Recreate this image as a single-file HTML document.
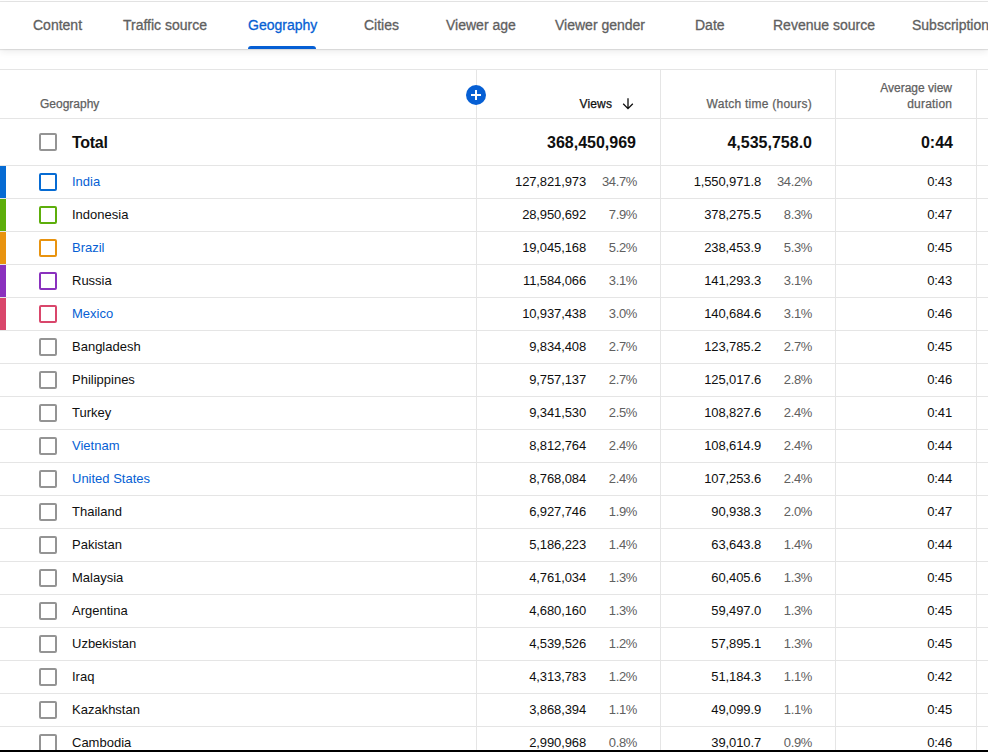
<!DOCTYPE html><html><head><meta charset="utf-8"><style>
*{margin:0;padding:0;box-sizing:border-box}
html,body{width:988px;height:752px;overflow:hidden;background:#fff;font-family:"Liberation Sans",sans-serif;position:relative}
.a{position:absolute;white-space:nowrap}
.hl{position:absolute;left:0;width:988px;height:1px;background:#e5e5e5}
.vl{position:absolute;width:1px;background:#e5e5e5}
.tab{position:absolute;white-space:nowrap;top:17px;font-size:14px;line-height:16px;color:#606060;-webkit-text-stroke:0.3px currentColor}
.cb{position:absolute;left:39px;width:18px;height:18px;border:2px solid #949494;border-radius:2px}
.nm{position:absolute;left:72px;font-size:13px;line-height:16px;color:#0f0f0f}
.num{position:absolute;font-size:13px;line-height:16px;color:#0f0f0f;text-align:right;letter-spacing:-0.12px}
.pct{position:absolute;font-size:13px;line-height:16px;color:#606060;text-align:right;letter-spacing:-0.35px}
.hd{position:absolute;font-size:12px;line-height:16px;color:#606060;text-align:right;-webkit-text-stroke:0.25px currentColor;white-space:nowrap}
.tot{position:absolute;font-size:16px;line-height:20px;white-space:nowrap;color:#0f0f0f;font-weight:bold;text-align:right}
</style></head><body>
<div class="hl" style="top:1px;background:#e5e5e5"></div>
<div class="a" style="left:0;top:2px;width:988px;height:47px;background:#fff;box-shadow:0 1px 1px rgba(0,0,0,0.10), 0 3px 7px rgba(0,0,0,0.07)"></div>
<div class="tab" style="left:33px;color:#606060">Content</div>
<div class="tab" style="left:123px;color:#606060">Traffic source</div>
<div class="tab" style="left:248px;color:#065fd4">Geography</div>
<div class="tab" style="left:364px;color:#606060">Cities</div>
<div class="tab" style="left:446px;color:#606060">Viewer age</div>
<div class="tab" style="left:555px;color:#606060">Viewer gender</div>
<div class="tab" style="left:695px;color:#606060">Date</div>
<div class="tab" style="left:773px;color:#606060">Revenue source</div>
<div class="tab" style="left:912px;color:#606060">Subscription status</div>
<div class="a" style="left:248px;top:46px;width:68px;height:3px;background:#065fd4;border-radius:3px 3px 0 0"></div>
<div class="hl" style="top:69px"></div>
<div class="hl" style="top:118px"></div>
<div class="hl" style="top:165px"></div>
<div class="hl" style="top:198px"></div>
<div class="hl" style="top:231px"></div>
<div class="hl" style="top:264px"></div>
<div class="hl" style="top:297px"></div>
<div class="hl" style="top:330px"></div>
<div class="hl" style="top:363px"></div>
<div class="hl" style="top:396px"></div>
<div class="hl" style="top:429px"></div>
<div class="hl" style="top:462px"></div>
<div class="hl" style="top:495px"></div>
<div class="hl" style="top:528px"></div>
<div class="hl" style="top:561px"></div>
<div class="hl" style="top:594px"></div>
<div class="hl" style="top:627px"></div>
<div class="hl" style="top:660px"></div>
<div class="hl" style="top:693px"></div>
<div class="hl" style="top:726px"></div>
<div class="hl" style="top:759px"></div>
<div class="vl" style="left:476px;top:70px;height:690px"></div>
<div class="vl" style="left:660px;top:70px;height:690px"></div>
<div class="vl" style="left:835px;top:70px;height:690px"></div>
<div class="vl" style="left:976px;top:70px;height:690px"></div>
<div class="hd" style="left:40px;top:96px;text-align:left">Geography</div>
<div class="a" style="left:466px;top:85px;width:20px;height:20px;border-radius:50%;background:#065fd4"></div>
<div class="a" style="left:471px;top:94px;width:10px;height:2px;background:#fff"></div>
<div class="a" style="left:475px;top:90px;width:2px;height:10px;background:#fff"></div>
<div class="hd" style="left:500px;width:112.2px;top:96px;color:#0f0f0f;letter-spacing:0.2px">Views</div>
<svg class="a" style="left:620px;top:96px" width="16" height="16" viewBox="0 0 16 16"><path d="M8 2.2v10.3M3.2 7.8L8 12.6l4.8-4.8" fill="none" stroke="#0f0f0f" stroke-width="1.3"/></svg>
<div class="hd" style="left:660px;width:152px;top:96px;letter-spacing:0.25px">Watch time (hours)</div>
<div class="hd" style="left:835px;width:117px;top:80px">Average view</div>
<div class="hd" style="left:835px;width:117.2px;top:96px;letter-spacing:0.2px">duration</div>
<div class="cb" style="top:133px"></div>
<div class="tot" style="left:72px;top:133px;text-align:left;letter-spacing:-0.3px">Total</div>
<div class="tot" style="left:480px;width:156px;top:133px">368,450,969</div>
<div class="tot" style="left:660px;width:152px;top:133px">4,535,758.0</div>
<div class="tot" style="left:835px;width:118px;top:133px">0:44</div>
<div class="a" style="left:0;top:166px;width:6px;height:32px;background:#066bd3"></div>
<div class="cb" style="top:173px;border-color:#066bd3"></div>
<div class="nm" style="top:174px;color:#065fd4">India</div>
<div class="num" style="left:486px;width:100px;top:174px">127,821,973</div>
<div class="pct" style="left:596px;width:41px;top:174px">34.7%</div>
<div class="num" style="left:660px;width:101px;top:174px">1,550,971.8</div>
<div class="pct" style="left:771px;width:41px;top:174px">34.2%</div>
<div class="num" style="left:835px;width:117px;top:174px">0:43</div>
<div class="a" style="left:0;top:199px;width:6px;height:32px;background:#5dae0b"></div>
<div class="cb" style="top:206px;border-color:#5dae0b"></div>
<div class="nm" style="top:207px;color:#0f0f0f">Indonesia</div>
<div class="num" style="left:486px;width:100px;top:207px">28,950,692</div>
<div class="pct" style="left:596px;width:41px;top:207px">7.9%</div>
<div class="num" style="left:660px;width:101px;top:207px">378,275.5</div>
<div class="pct" style="left:771px;width:41px;top:207px">8.3%</div>
<div class="num" style="left:835px;width:117px;top:207px">0:47</div>
<div class="a" style="left:0;top:232px;width:6px;height:32px;background:#e8930f"></div>
<div class="cb" style="top:239px;border-color:#e8930f"></div>
<div class="nm" style="top:240px;color:#065fd4">Brazil</div>
<div class="num" style="left:486px;width:100px;top:240px">19,045,168</div>
<div class="pct" style="left:596px;width:41px;top:240px">5.2%</div>
<div class="num" style="left:660px;width:101px;top:240px">238,453.9</div>
<div class="pct" style="left:771px;width:41px;top:240px">5.3%</div>
<div class="num" style="left:835px;width:117px;top:240px">0:45</div>
<div class="a" style="left:0;top:265px;width:6px;height:32px;background:#8a31be"></div>
<div class="cb" style="top:272px;border-color:#8a31be"></div>
<div class="nm" style="top:273px;color:#0f0f0f">Russia</div>
<div class="num" style="left:486px;width:100px;top:273px">11,584,066</div>
<div class="pct" style="left:596px;width:41px;top:273px">3.1%</div>
<div class="num" style="left:660px;width:101px;top:273px">141,293.3</div>
<div class="pct" style="left:771px;width:41px;top:273px">3.1%</div>
<div class="num" style="left:835px;width:117px;top:273px">0:43</div>
<div class="a" style="left:0;top:298px;width:6px;height:32px;background:#d9466b"></div>
<div class="cb" style="top:305px;border-color:#d9466b"></div>
<div class="nm" style="top:306px;color:#065fd4">Mexico</div>
<div class="num" style="left:486px;width:100px;top:306px">10,937,438</div>
<div class="pct" style="left:596px;width:41px;top:306px">3.0%</div>
<div class="num" style="left:660px;width:101px;top:306px">140,684.6</div>
<div class="pct" style="left:771px;width:41px;top:306px">3.1%</div>
<div class="num" style="left:835px;width:117px;top:306px">0:46</div>
<div class="cb" style="top:338px"></div>
<div class="nm" style="top:339px;color:#0f0f0f">Bangladesh</div>
<div class="num" style="left:486px;width:100px;top:339px">9,834,408</div>
<div class="pct" style="left:596px;width:41px;top:339px">2.7%</div>
<div class="num" style="left:660px;width:101px;top:339px">123,785.2</div>
<div class="pct" style="left:771px;width:41px;top:339px">2.7%</div>
<div class="num" style="left:835px;width:117px;top:339px">0:45</div>
<div class="cb" style="top:371px"></div>
<div class="nm" style="top:372px;color:#0f0f0f">Philippines</div>
<div class="num" style="left:486px;width:100px;top:372px">9,757,137</div>
<div class="pct" style="left:596px;width:41px;top:372px">2.7%</div>
<div class="num" style="left:660px;width:101px;top:372px">125,017.6</div>
<div class="pct" style="left:771px;width:41px;top:372px">2.8%</div>
<div class="num" style="left:835px;width:117px;top:372px">0:46</div>
<div class="cb" style="top:404px"></div>
<div class="nm" style="top:405px;color:#0f0f0f">Turkey</div>
<div class="num" style="left:486px;width:100px;top:405px">9,341,530</div>
<div class="pct" style="left:596px;width:41px;top:405px">2.5%</div>
<div class="num" style="left:660px;width:101px;top:405px">108,827.6</div>
<div class="pct" style="left:771px;width:41px;top:405px">2.4%</div>
<div class="num" style="left:835px;width:117px;top:405px">0:41</div>
<div class="cb" style="top:437px"></div>
<div class="nm" style="top:438px;color:#065fd4">Vietnam</div>
<div class="num" style="left:486px;width:100px;top:438px">8,812,764</div>
<div class="pct" style="left:596px;width:41px;top:438px">2.4%</div>
<div class="num" style="left:660px;width:101px;top:438px">108,614.9</div>
<div class="pct" style="left:771px;width:41px;top:438px">2.4%</div>
<div class="num" style="left:835px;width:117px;top:438px">0:44</div>
<div class="cb" style="top:470px"></div>
<div class="nm" style="top:471px;color:#065fd4">United States</div>
<div class="num" style="left:486px;width:100px;top:471px">8,768,084</div>
<div class="pct" style="left:596px;width:41px;top:471px">2.4%</div>
<div class="num" style="left:660px;width:101px;top:471px">107,253.6</div>
<div class="pct" style="left:771px;width:41px;top:471px">2.4%</div>
<div class="num" style="left:835px;width:117px;top:471px">0:44</div>
<div class="cb" style="top:503px"></div>
<div class="nm" style="top:504px;color:#0f0f0f">Thailand</div>
<div class="num" style="left:486px;width:100px;top:504px">6,927,746</div>
<div class="pct" style="left:596px;width:41px;top:504px">1.9%</div>
<div class="num" style="left:660px;width:101px;top:504px">90,938.3</div>
<div class="pct" style="left:771px;width:41px;top:504px">2.0%</div>
<div class="num" style="left:835px;width:117px;top:504px">0:47</div>
<div class="cb" style="top:536px"></div>
<div class="nm" style="top:537px;color:#0f0f0f">Pakistan</div>
<div class="num" style="left:486px;width:100px;top:537px">5,186,223</div>
<div class="pct" style="left:596px;width:41px;top:537px">1.4%</div>
<div class="num" style="left:660px;width:101px;top:537px">63,643.8</div>
<div class="pct" style="left:771px;width:41px;top:537px">1.4%</div>
<div class="num" style="left:835px;width:117px;top:537px">0:44</div>
<div class="cb" style="top:569px"></div>
<div class="nm" style="top:570px;color:#0f0f0f">Malaysia</div>
<div class="num" style="left:486px;width:100px;top:570px">4,761,034</div>
<div class="pct" style="left:596px;width:41px;top:570px">1.3%</div>
<div class="num" style="left:660px;width:101px;top:570px">60,405.6</div>
<div class="pct" style="left:771px;width:41px;top:570px">1.3%</div>
<div class="num" style="left:835px;width:117px;top:570px">0:45</div>
<div class="cb" style="top:602px"></div>
<div class="nm" style="top:603px;color:#0f0f0f">Argentina</div>
<div class="num" style="left:486px;width:100px;top:603px">4,680,160</div>
<div class="pct" style="left:596px;width:41px;top:603px">1.3%</div>
<div class="num" style="left:660px;width:101px;top:603px">59,497.0</div>
<div class="pct" style="left:771px;width:41px;top:603px">1.3%</div>
<div class="num" style="left:835px;width:117px;top:603px">0:45</div>
<div class="cb" style="top:635px"></div>
<div class="nm" style="top:636px;color:#0f0f0f">Uzbekistan</div>
<div class="num" style="left:486px;width:100px;top:636px">4,539,526</div>
<div class="pct" style="left:596px;width:41px;top:636px">1.2%</div>
<div class="num" style="left:660px;width:101px;top:636px">57,895.1</div>
<div class="pct" style="left:771px;width:41px;top:636px">1.3%</div>
<div class="num" style="left:835px;width:117px;top:636px">0:45</div>
<div class="cb" style="top:668px"></div>
<div class="nm" style="top:669px;color:#0f0f0f">Iraq</div>
<div class="num" style="left:486px;width:100px;top:669px">4,313,783</div>
<div class="pct" style="left:596px;width:41px;top:669px">1.2%</div>
<div class="num" style="left:660px;width:101px;top:669px">51,184.3</div>
<div class="pct" style="left:771px;width:41px;top:669px">1.1%</div>
<div class="num" style="left:835px;width:117px;top:669px">0:42</div>
<div class="cb" style="top:701px"></div>
<div class="nm" style="top:702px;color:#0f0f0f">Kazakhstan</div>
<div class="num" style="left:486px;width:100px;top:702px">3,868,394</div>
<div class="pct" style="left:596px;width:41px;top:702px">1.1%</div>
<div class="num" style="left:660px;width:101px;top:702px">49,099.9</div>
<div class="pct" style="left:771px;width:41px;top:702px">1.1%</div>
<div class="num" style="left:835px;width:117px;top:702px">0:45</div>
<div class="cb" style="top:734px"></div>
<div class="nm" style="top:735px;color:#0f0f0f">Cambodia</div>
<div class="num" style="left:486px;width:100px;top:735px">2,990,968</div>
<div class="pct" style="left:596px;width:41px;top:735px">0.8%</div>
<div class="num" style="left:660px;width:101px;top:735px">39,010.7</div>
<div class="pct" style="left:771px;width:41px;top:735px">0.9%</div>
<div class="num" style="left:835px;width:117px;top:735px">0:46</div>
<div class="a" style="left:0;top:750px;width:988px;height:2px;background:#000"></div>
</body></html>
